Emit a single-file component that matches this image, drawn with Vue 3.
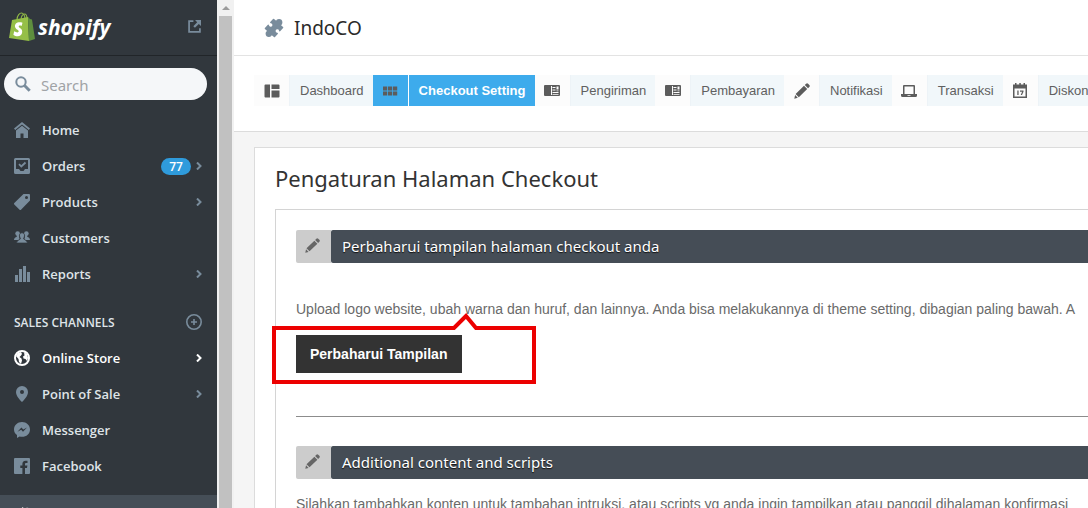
<script setup>
import { ref } from 'vue'

const query = ref('')

const primary = [
  { label: 'Home', icon: 'home' },
  { label: 'Orders', icon: 'orders', badge: 77, arrow: true },
  { label: 'Products', icon: 'tag', arrow: true },
  { label: 'Customers', icon: 'people' },
  { label: 'Reports', icon: 'bars', arrow: true },
]
const channels = [
  { label: 'Online Store', icon: 'globe', arrow: true, active: true },
  { label: 'Point of Sale', icon: 'pin', arrow: true },
  { label: 'Messenger', icon: 'messenger' },
  { label: 'Facebook', icon: 'facebook' },
]
const tabs = [
  { label: 'Dashboard', icon: 'dashboard' },
  { label: 'Checkout Setting', icon: 'grid', active: true },
  { label: 'Pengiriman', icon: 'reader' },
  { label: 'Pembayaran', icon: 'reader' },
  { label: 'Notifikasi', icon: 'pencil' },
  { label: 'Transaksi', icon: 'laptop' },
  { label: 'Diskon', icon: 'calendar' },
]

const icons = {
  home: '<path d="M8 0 0 6.600l1.200 1.300L8 2.400l6.800 5.500L16 6.600zM8 3.700 2 8.500V16h4.500v-4.500h3V16H14V8.500z"/>',
  orders: '<path fill-rule="evenodd" d="M1.500 0h13A1.500 1.500 0 0 1 16 1.500v13a1.500 1.500 0 0 1-1.500 1.500h-13A1.500 1.500 0 0 1 0 14.500v-13A1.500 1.500 0 0 1 1.500 0zM2 2v9h3l1.500 2h3l1.500-2h3V2z"/><path d="m5 6.200 2.300 2.300 4.200-4" fill="none" stroke="currentColor" stroke-width="1.800"/>',
  tag: '<path fill-rule="evenodd" d="M9.500 0H15a1 1 0 0 1 1 1v5.500L7 15.700a1 1 0 0 1-1.400 0L.3 10.400a1 1 0 0 1 0-1.400zM12.500 2a1.500 1.500 0 1 0 0 3 1.500 1.500 0 0 0 0-3z"/>',
  people: '<circle cx="3.600" cy="3.600" r="2.300"/><circle cx="12.400" cy="3.600" r="2.300"/><path d="M0 10c0-2 1.500-2.600 2.800-3.200V5h2l.9 5zM16 10c0-2-1.500-2.600-2.800-3.200V5h-2l-.9 5z"/><path d="M8 2.800c1.700 0 2.600 1.200 2.500 3-.1 1.300-.6 2-1 2.600 0 1.500 3.700 1.400 4 4.600h-11c.3-3.200 4-3.100 4-4.600-.4-.6-.9-1.300-1-2.600C5.400 4 6.300 2.800 8 2.800z" stroke="#31373d" stroke-width=".7"/>',
  bars: '<path d="M1 9h3v7H1zM5 3h3v13H5zM9 0h3v16H9zM13 6h3v10h-3z"/>',
  globe: '<circle cx="8" cy="8" r="7" fill="none" stroke="currentColor" stroke-width="2"/><path d="M2 6 4 3l3-1 1 2-1 1.500L5.500 7l2 1.500.5 2L7 14l-2-2-.5-3zM10 2l3 2 1 4-1 3-1.500-2-2-.5L9 6.500l1.500-1z"/>',
  pin: '<path fill-rule="evenodd" d="M8 0a6 6 0 0 1 6 6c0 4-4 8-6 10-2-2-6-6-6-10a6 6 0 0 1 6-6zm0 4a2 2 0 1 0 0 4 2 2 0 0 0 0-4z"/>',
  messenger: '<path fill-rule="evenodd" d="M8 0c4.500 0 8 3.300 8 7.400s-3.500 7.400-8 7.400c-.8 0-1.600-.1-2.400-.3L3 16v-2.900C1.200 11.700 0 9.700 0 7.400 0 3.300 3.500 0 8 0zM3.500 9.800l3.700-2 1.800 2 4-4.300-3.700 2-1.900-2z"/>',
  facebook: '<path fill-rule="evenodd" d="M1 0h14a1 1 0 0 1 1 1v14a1 1 0 0 1-1 1h-4v-6h2l.4-2.400H11V6.200c0-.8.300-1.200 1.300-1.200h1.200V2.700h-2C9.300 2.700 8.400 4 8.400 6v1.600H6.300V10h2.100v6H1a1 1 0 0 1-1-1V1a1 1 0 0 1 1-1z"/>',
  dashboard: '<path d="M1.500 1.500H6v13H1.500a1 1 0 0 1-1-1v-11a1 1 0 0 1 1-1zM7.500 1.500h7a1 1 0 0 1 1 1V6h-8zM7.500 7.500h8v6a1 1 0 0 1-1 1h-7z"/>',
  grid: '<path d="M1 3.500h4.200v4H1zM6 3.500h4.200v4H6zM11 3.500h4.200v4H11zM1 8.400h4.200v4H1zM6 8.400h4.200v4H6zM11 8.400h4.200v4H11z"/>',
  reader: '<path fill-rule="evenodd" d="M1 2h14a1 1 0 0 1 1 1v9a1 1 0 0 1-1 1H1a1 1 0 0 1-1-1V3a1 1 0 0 1 1-1zM7 3v9h1V3zM8.500 4h3v1h-3zM8.500 6.500h3v1h-3zM8.500 9h6v1h-6zM12.500 3.500h2v3h-2zM8.500 11h6v.8h-6zM12.500 7.500h2v.8h-2z"/>',
  pencil: '<path d="m10.800 2 1.300-1.300a1.400 1.400 0 0 1 2 0l1.200 1.200a1.400 1.400 0 0 1 0 2L14 5.200zM10 2.800 13.200 6l-8.400 8.200-3.200-3.200zM1.100 12.100l2.700 2.700L.3 15.700z"/>',
  laptop: '<path fill-rule="evenodd" d="M3 2h10a1 1 0 0 1 1 1v8h2v1.500a1.500 1.500 0 0 1-1.500 1.500h-13A1.500 1.500 0 0 1 0 12.500V11h2V3a1 1 0 0 1 1-1zm.5 1.500V11h9V3.500zM6.500 12v.8h3V12z"/>',
  calendar: '<path fill-rule="evenodd" d="M1 1.500h14V15H1zm1.500 4v8h11v-8z"/><path d="M3 0h1.500v3H3zM7.300 0h1.500v3H7.300zM11.500 0H13v3h-1.500z"/><path d="M5.300 7.500h1.300V12H5.300zM8 7.500h3.500v1.200L10 12H8.700l1.400-3.300H8z"/>',
  puzzle: '<path transform="rotate(42 10 10)" d="M4.500 4.500h3.700a2.300 2.300 0 1 1 3.600 0h3.700v3.700a2.300 2.300 0 1 0 0 3.600v3.700h-3.700a2.300 2.300 0 1 1-3.600 0H4.500v-3.700a2.300 2.300 0 1 0 0-3.600z" stroke="currentColor" stroke-width="1.400" stroke-linejoin="round"/>',
}
</script>

<template>
  <div class="page">
    <aside class="sidebar">
      <header class="brand">
        <a href="#" class="logo" aria-label="shopify">
          <svg class="bag" viewBox="0 0 26 30" width="26" height="30">
            <path d="M8 8C8 3 11 1 12.500 1S16 3 16 7M12 8c0-4 2-6 3.500-6S18 4 18 7" fill="none" stroke="#8fb747" stroke-width="1.200" />
            <path d="M3 8 19 5l1 24L0 26z" fill="#95bf47" />
            <path d="m19 5 2 2 2 .5L26 27l-6 2z" fill="#5e8e3e" />
            <path d="M13.500 10.800c-5-1.500-8 1-7.500 4 .4 2.500 3.700 3 3.700 4.500 0 1.600-2.500 1.300-4.500-.1l-.8 3.600c3 2.500 8.400 2.200 8.800-2.700.3-3.500-3.400-4.200-3.500-5.500 0-1.200 1.500-1.200 2.900-.6z" fill="#fff" />
          </svg>
          <span>shopify</span>
        </a>
        <a href="#" class="external" aria-label="View store">
          <svg viewBox="0 0 12 12" width="13" height="13">
            <path d="M5 1H1v10h10V7.500" fill="none" stroke="currentColor" stroke-width="1.600" />
            <path d="M6.500 0H12v5.500L10 3.600 6.400 7.200 4.900 5.700 8.500 2z" fill="currentColor" />
          </svg>
        </a>
      </header>

      <label class="search">
        <svg viewBox="0 0 16 16" width="16" height="16">
          <circle cx="6" cy="6" r="4.700" fill="none" stroke="currentColor" stroke-width="2" />
          <path d="m9.500 9.500 5.200 5.200" stroke="currentColor" stroke-width="3" />
        </svg>
        <input v-model="query" type="text" placeholder="Search" aria-label="Search" />
      </label>

      <nav class="menu">
        <a v-for="item in primary" :key="item.label" href="#" class="item">
          <svg class="glyph" viewBox="0 0 16 16" width="16" height="16" v-html="icons[item.icon]" />
          <span class="name">{{ item.label }}</span>
          <span v-if="item.badge" class="badge">{{ item.badge }}</span>
          <svg v-if="item.arrow" class="chevron" viewBox="0 0 6 8" width="6" height="8"><path d="m1 .5 3.500 3.500L1 7.500" /></svg>
        </a>
      </nav>

      <div class="section">
        <h2>SALES CHANNELS</h2>
        <button type="button" aria-label="Add sales channel">
          <svg viewBox="0 0 16 16" width="16" height="16">
            <circle cx="8" cy="8" r="7.200" />
            <path d="M8 5v6M5 8h6" />
          </svg>
        </button>
      </div>

      <nav class="menu">
        <a v-for="item in channels" :key="item.label" href="#" class="item" :class="{ active: item.active }">
          <svg class="glyph" viewBox="0 0 16 16" width="16" height="16" v-html="icons[item.icon]" />
          <span class="name">{{ item.label }}</span>
          <svg v-if="item.arrow" class="chevron" viewBox="0 0 6 8" width="6" height="8"><path d="m1 .5 3.500 3.500L1 7.500" /></svg>
        </a>
      </nav>

      <a href="#" class="apps">
        <svg viewBox="0 0 20 20" width="18" height="18" v-html="icons.puzzle" />
        <span>Apps</span>
      </a>
    </aside>

    <div class="scrollbar">
      <svg viewBox="0 0 8 4" width="8" height="4"><path d="M4 0 8 4H0z" /></svg>
      <div class="thumb"></div>
    </div>

    <main class="main">
      <header class="title">
        <svg viewBox="0 0 20 20" width="22" height="22" v-html="icons.puzzle" />
        <h1>IndoCO</h1>
      </header>

      <nav class="tabs">
        <a v-for="tab in tabs" :key="tab.label" href="#" class="tab" :class="{ active: tab.active }">
          <span class="tab-icon"><svg viewBox="0 0 16 16" width="16" height="16" v-html="icons[tab.icon]" /></span>
          <span class="tab-label">{{ tab.label }}</span>
        </a>
      </nav>

      <section class="card">
        <h2>Pengaturan Halaman Checkout</h2>
        <div class="panel">
          <h3 class="bar">
            <span class="bar-icon"><svg viewBox="0 0 16 16" width="15" height="15" v-html="icons.pencil" /></span>
            <span class="bar-label">Perbaharui tampilan halaman checkout anda</span>
          </h3>
          <p class="intro">Upload logo website, ubah warna dan huruf, dan lainnya. Anda bisa melakukannya di theme setting, dibagian paling bawah. A</p>
          <div class="action">
            <button type="button">Perbaharui Tampilan</button>
            <svg class="callout" viewBox="0 0 264 72" width="264" height="72">
              <path d="M181 16 194 4l11 12" fill="#fff" stroke="none" />
              <path d="M2 15h180l12-12 10 12h58v54H2z" />
            </svg>
          </div>
          <hr />
          <h3 class="bar">
            <span class="bar-icon"><svg viewBox="0 0 16 16" width="15" height="15" v-html="icons.pencil" /></span>
            <span class="bar-label">Additional content and scripts</span>
          </h3>
          <p class="note">Silahkan tambahkan konten untuk tambahan intruksi, atau scripts yg anda ingin tampilkan atau panggil dihalaman konfirmasi</p>
        </div>
      </section>
    </main>
  </div>
</template>

<style>
body {
  overflow: hidden;
}
</style>

<style scoped>
.page {
  display: flex;
  height: 100vh;
  overflow: hidden;
  background: #f5f5f5;
  font-family: "Liberation Sans", Arial, sans-serif;
}
.page * {
  box-sizing: border-box;
}
a {
  color: inherit;
  text-decoration: none;
}
svg {
  display: block;
  flex: none;
  fill: currentColor;
}
h1, h2, h3, p {
  margin: 0;
}

.sidebar {
  flex: none;
  width: 217px;
  background: #31373d;
  color: #dfe4e8;
  font-family: "Open Sans", "Noto Sans", sans-serif;
}
.brand {
  display: flex;
  align-items: center;
  justify-content: space-between;
  height: 56px;
  padding: 0 16px 2px 9px;
  border-bottom: 1px solid #212529;
}
.logo {
  display: flex;
  align-items: center;
  gap: 3px;
  color: #fff;
  font-size: 21px;
  font-weight: 700;
  font-style: italic;
  line-height: 28px;
}
.external {
  color: #798c9c;
}
.search {
  display: flex;
  align-items: center;
  gap: 10px;
  height: 32px;
  margin: 12px 10px 12px 4px;
  padding: 0 11px;
  border-radius: 16px;
  background: #f5f7f9;
  color: #798c9c;
}
.search input {
  min-width: 0;
  flex: 1;
  padding: 2px 0 0;
  border: 0;
  outline: 0;
  background: none;
  color: #31373d;
  font: 15px/24px "Noto Sans", sans-serif;
}
.search input::placeholder {
  color: #a0a3a6;
  opacity: 1;
}
.item {
  display: flex;
  align-items: center;
  height: 36px;
  padding: 0 15px 0 14px;
  font-size: 13px;
  font-weight: 600;
}
.glyph {
  margin-right: 12px;
  color: #798c9c;
}
.name {
  flex: 1;
}
.badge {
  min-width: 30px;
  margin-right: 5px;
  border-radius: 9px;
  background: #2f9bdc;
  color: #fff;
  font-size: 12px;
  line-height: 17px;
  text-align: center;
}
.chevron {
  fill: none;
  stroke: #798c9c;
  stroke-width: 2;
}
.active .glyph {
  color: #fff;
}
.item.active {
  color: #fff;
}
.item.active .chevron {
  stroke: #fff;
}
.section {
  display: flex;
  align-items: center;
  justify-content: space-between;
  height: 36px;
  margin-top: 12px;
  padding: 0 15px 0 14px;
}
.section h2 {
  font-size: 12px;
  font-weight: 600;
}
.section button {
  padding: 0;
  border: 0;
  background: none;
}
.section svg {
  fill: none;
  stroke: #798c9c;
  stroke-width: 1.6;
}
.apps {
  display: flex;
  align-items: center;
  gap: 10px;
  height: 40px;
  margin-top: 11px;
  padding: 0 14px;
  background: #454e57;
  color: #fff;
  font-size: 13px;
  font-weight: 600;
}

.scrollbar {
  display: flex;
  flex: none;
  flex-direction: column;
  align-items: center;
  gap: 6px;
  width: 17px;
  padding-top: 6px;
  background: #f1f1f1;
  color: #9b9b9b;
}
.thumb {
  flex: 1;
  width: 13px;
  background: #c1c1c1;
}

.main {
  flex: 1;
  min-width: 0;
  overflow: hidden;
}
.title {
  display: flex;
  align-items: center;
  gap: 9px;
  height: 56px;
  padding-left: 29px;
  border-bottom: 1px solid #e3e3e3;
  background: #fff;
  color: #798c9c;
}
.title h1 {
  color: #2a2a2a;
  font: 400 19px/28px "Noto Sans", sans-serif;
}
.tabs {
  display: flex;
  padding: 19px 0 25px 20px;
  border-bottom: 1px solid #dcdcdc;
  background: #fff;
}
.tab {
  display: flex;
  flex: none;
  height: 31px;
  color: #606060;
  font-size: 13px;
  line-height: 31px;
}
.tab-icon {
  display: flex;
  align-items: center;
  justify-content: center;
  width: 35px;
  background: #fcfcfc;
  color: #5c5c5c;
}
.tab-label {
  padding: 0 9px 0 10px;
  border-left: 1px solid #edf3f7;
  background: #f1f7fa;
}
.tab.active {
  color: #fff;
  font-weight: 700;
}
.tab.active .tab-icon,
.tab.active .tab-label {
  background: #3dabec;
}
.tab.active .tab-label {
  border-left-color: #fff;
}

.card {
  margin: 15px 0 0 20px;
  padding: 14px 0 0 20px;
  border: 1px solid #dcdcdc;
  border-right: 0;
  background: #fff;
}
.card > h2 {
  color: #333;
  font: 400 22px/32px "Noto Sans", sans-serif;
  white-space: nowrap;
}
.panel {
  margin-top: 15px;
  padding: 20px 0 40px 20px;
  border: 1px solid #d4d4d4;
  border-right: 0;
}
.bar {
  display: flex;
  height: 33px;
  color: #fff;
  font: 400 15px/32px "Noto Sans", sans-serif;
  white-space: nowrap;
}
.bar-icon {
  display: flex;
  flex: none;
  align-items: center;
  justify-content: center;
  width: 35px;
  padding: 0 2px 2px 0;
  border-radius: 2px 0 0 2px;
  background: #ccc;
  color: #666;
}
.bar-label {
  flex: 1;
  padding-left: 11px;
  border-radius: 2px 0 0 2px;
  background: #454d56;
  text-shadow: 0 1px 1px #111;
}
.intro,
.note {
  color: #6a6a6a;
  font-size: 14px;
  line-height: 20px;
  white-space: nowrap;
}
.intro {
  margin-top: 36px;
}
.note {
  margin-top: 15px;
}
.action {
  position: relative;
  margin-top: 16px;
}
.action button {
  display: block;
  height: 38px;
  padding: 0 15px 0 14px;
  border: 0;
  background: #333;
  color: #fff;
  font: 700 14px/38px "Liberation Sans", Arial, sans-serif;
}
.callout {
  position: absolute;
  top: -22px;
  left: -24px;
  fill: none;
  stroke: #ec0000;
  stroke-width: 4;
  pointer-events: none;
}
hr {
  margin: 43px 0 29px;
  border: 0;
  border-top: 1px solid #8c8c8c;
}
</style>
